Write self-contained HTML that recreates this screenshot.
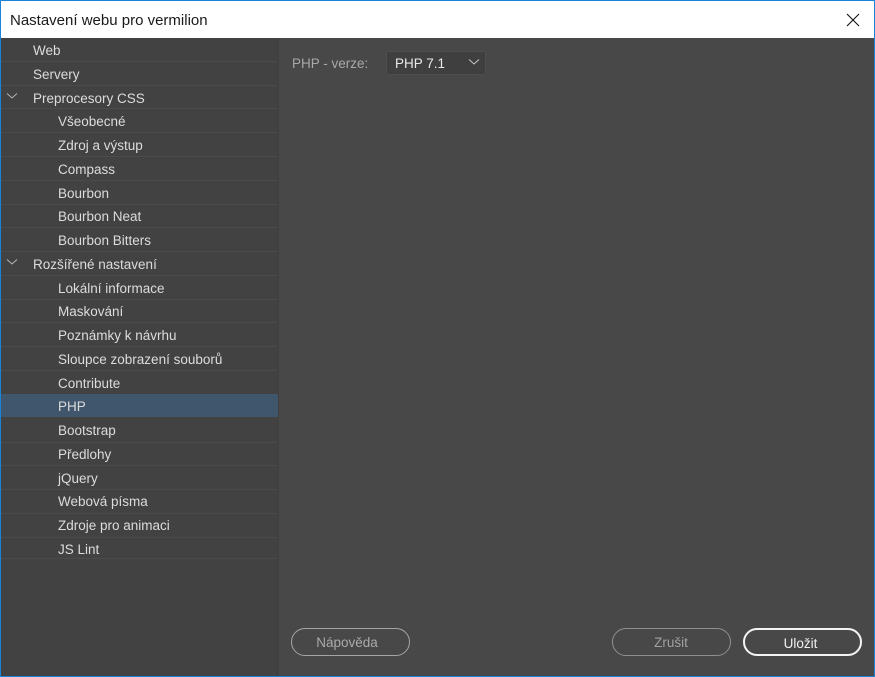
<!DOCTYPE html>
<html><head><meta charset="utf-8">
<style>
html,body{margin:0;padding:0;width:875px;height:677px;overflow:hidden;background:#484848;font-family:"Liberation Sans",sans-serif}
.a{position:absolute;white-space:nowrap}
#frame{position:absolute;left:0;top:0;width:875px;height:677px;box-sizing:border-box;border:1px solid #1883d7;pointer-events:none}
#title{left:1px;top:1px;width:873px;height:37px;background:#fff}
#tt{left:10px;top:11px;font-size:15px;line-height:20px;color:#1a1a1a}
#side{left:1px;top:38px;width:276px;height:638px;background:#424242}
#div{left:277px;top:38px;width:2px;height:638px;background:#404040}
.sep{position:absolute;left:1px;width:276px;height:1px;background:#4b4b4b}
.t{position:absolute;font-size:13.5px;line-height:20px;color:#dcdcdc;white-space:nowrap;margin-top:1px}
#sel{left:1px;top:394px;width:277px;height:23px;background:#3f566c}
.btn{position:absolute;box-sizing:border-box;border-radius:14px;text-align:center;font-size:13.5px;line-height:28px;height:28px;top:628px;background:#484848}
</style></head><body>
<div class="a" id="title"></div>
<div class="a" id="tt">Nastavení webu pro vermilion</div>
<svg class="a" style="left:846px;top:13px" width="14" height="14" viewBox="0 0 14 14"><path d="M1 1L13 13M13 1L1 13" stroke="#111" stroke-width="1.1" fill="none"/></svg>
<div class="a" id="side"></div>
<div class="a" id="div"></div>
<div class="a" id="sel"></div>
<div class="sep" style="top:61px"></div>
<div class="sep" style="top:85px"></div>
<div class="sep" style="top:108px"></div>
<div class="sep" style="top:132px"></div>
<div class="sep" style="top:156px"></div>
<div class="sep" style="top:180px"></div>
<div class="sep" style="top:204px"></div>
<div class="sep" style="top:227px"></div>
<div class="sep" style="top:251px"></div>
<div class="sep" style="top:275px"></div>
<div class="sep" style="top:299px"></div>
<div class="sep" style="top:322px"></div>
<div class="sep" style="top:346px"></div>
<div class="sep" style="top:370px"></div>
<div class="sep" style="top:442px"></div>
<div class="sep" style="top:465px"></div>
<div class="sep" style="top:489px"></div>
<div class="sep" style="top:513px"></div>
<div class="sep" style="top:537px"></div>
<div class="sep" style="top:558px"></div>
<div class="t" style="left:33px;top:40px">Web</div>
<div class="t" style="left:33px;top:64px">Servery</div>
<div class="t" style="left:33px;top:88px">Preprocesory CSS</div>
<div class="t" style="left:58px;top:111px">Všeobecné</div>
<div class="t" style="left:58px;top:135px">Zdroj a výstup</div>
<div class="t" style="left:58px;top:159px">Compass</div>
<div class="t" style="left:58px;top:183px">Bourbon</div>
<div class="t" style="left:58px;top:206px">Bourbon Neat</div>
<div class="t" style="left:58px;top:230px">Bourbon Bitters</div>
<div class="t" style="left:33px;top:254px">Rozšířené nastavení</div>
<div class="t" style="left:58px;top:278px">Lokální informace</div>
<div class="t" style="left:58px;top:301px">Maskování</div>
<div class="t" style="left:58px;top:325px">Poznámky k návrhu</div>
<div class="t" style="left:58px;top:349px">Sloupce zobrazení souborů</div>
<div class="t" style="left:58px;top:373px">Contribute</div>
<div class="t" style="left:58px;top:396px">PHP</div>
<div class="t" style="left:58px;top:420px">Bootstrap</div>
<div class="t" style="left:58px;top:444px">Předlohy</div>
<div class="t" style="left:58px;top:468px">jQuery</div>
<div class="t" style="left:58px;top:491px">Webová písma</div>
<div class="t" style="left:58px;top:515px">Zdroje pro animaci</div>
<div class="t" style="left:58px;top:539px">JS Lint</div>
<svg class="a" style="left:6px;top:92px" width="12" height="8" viewBox="0 0 12 8"><path d="M1 1.5L6 6L11 1.5" stroke="#b5b5b5" stroke-width="1" fill="none"/></svg>
<svg class="a" style="left:6px;top:258px" width="12" height="8" viewBox="0 0 12 8"><path d="M1 1.5L6 6L11 1.5" stroke="#b5b5b5" stroke-width="1" fill="none"/></svg>
<div class="t" style="left:292px;top:53px;color:#a8a8a8">PHP - verze:</div>
<div class="a" style="left:386px;top:51px;width:100px;height:24px;box-sizing:border-box;background:#3f3f3f;border:1px solid #4e4e4e;border-radius:2px"></div>
<div class="t" style="left:395px;top:53px;color:#e8e8e8">PHP 7.1</div>
<svg class="a" style="left:468px;top:58px" width="12" height="8" viewBox="0 0 12 8"><path d="M1 1.5L6 6L11 1.5" stroke="#c8c8c8" stroke-width="1" fill="none"/></svg>
<div class="btn" style="left:291px;width:119px;border:1px solid #a5a5a5;color:#aaa;padding-right:7px">Nápověda</div>
<div class="btn" style="left:612px;width:119px;border:1px solid #8f8f8f;color:#a0a0a0;padding-right:1px">Zrušit</div>
<div class="btn" style="left:743px;width:119px;border:2px solid #f4f4f4;color:#f2f2f2;line-height:27px;padding-right:4px">Uložit</div>
<div id="frame"></div>
</body></html>
